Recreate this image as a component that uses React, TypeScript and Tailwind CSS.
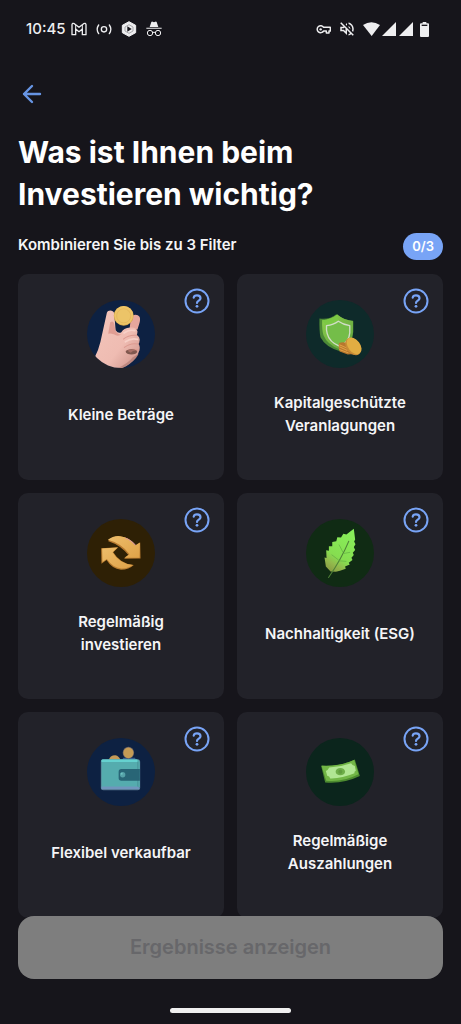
import { useState, type ReactNode } from "react";

function HandArt() {
  return (
    <svg viewBox="52 62 202 202" className="size-17" aria-hidden="true">
      <defs>
        <clipPath id="hand-clip">
          <circle cx="153" cy="163" r="101" />
        </clipPath>
        <linearGradient id="hand-skin" x1="0" y1="0" x2="1" y2="1">
          <stop offset="0" stopColor="#f3c5bb" />
          <stop offset="0.6" stopColor="#efbcb2" />
          <stop offset="1" stopColor="#c98d84" />
        </linearGradient>
      </defs>
      <circle cx="153" cy="163" r="101" fill="#0d2142" />
      <g clipPath="url(#hand-clip)">
        <path d="M182 118C184 104 202 102 208 112C212 120 208 132 202 150L178 152Z" fill="#e5a69c" />
        <path
          d="M111 100C114 91 130 91 133 102L137 152Q145 163 154 158Q160 146 180 144Q198 142 202 155Q202 162 200 166Q211 172 208 184Q208 190 205 193Q212 202 206 216Q202 235 178 252Q160 266 140 268Q100 262 74 234Q86 212 92 186Z"
          fill="url(#hand-skin)"
        />
        <path d="M121 128Q131 122 133 134L137 154Q144 166 156 164Q143 172 132 164Q122 160 115 162Z" fill="#d98f85" opacity="0.7" />
        <path d="M160 178Q178 164 200 167M163 203Q182 188 204 193M168 214Q184 204 206 211" stroke="#dc9a90" strokeWidth="3" fill="none" strokeLinecap="round" />
        <path d="M162 160Q176 149 194 153M166 186Q184 174 202 179" stroke="#f7d0c7" strokeWidth="5" fill="none" strokeLinecap="round" />
        <ellipse cx="184" cy="216" rx="17" ry="8" fill="#80584f" />
        <path d="M172 213Q186 205 201 213Q190 210 182 219Z" fill="#a87067" />
        <path d="M206 222Q196 244 160 263L144 264Q174 250 188 232Z" fill="#a9756c" opacity="0.6" />
      </g>
      <circle cx="161" cy="109" r="29.500" fill="#d9a94f" />
      <circle cx="161" cy="108" r="28" fill="#edc566" />
      <circle cx="161" cy="109" r="21" fill="#ecc468" stroke="#dfb25a" strokeWidth="2" />
    </svg>
  );
}

function ShieldArt() {
  return (
    <svg viewBox="50 61 202 202" className="size-17" aria-hidden="true">
      <defs>
        <linearGradient id="shield-green" x1="0" y1="0" x2="1" y2="1">
          <stop offset="0" stopColor="#8cd04b" />
          <stop offset="1" stopColor="#5f9f3d" />
        </linearGradient>
      </defs>
      <circle cx="151" cy="162" r="101" fill="#0e2a2a" />
      <path d="M90 116Q120 120 140 103Q160 119 190 123V158Q188 196 153 214Q108 202 93 172Q89 152 90 116Z" fill="#4c8936" />
      <path d="M98 121Q124 120 143 104Q162 120 190 124V156Q188 190 150 208Q113 194 102 166Q97 150 98 121Z" fill="url(#shield-green)" />
      <path d="M98 121Q124 120 143 104L146 124Q131 136 111 138Z" fill="#7bc944" />
      <path d="M146 124Q160 134 180 137V158Q179 184 150 199Q119 186 113 161Q110 150 111 137Q132 135 146 124Z" fill="#74bd49" stroke="#d1ddc7" strokeWidth="4" strokeLinejoin="round" />
      <path d="M148 189Q160 184 174 190L202 215Q205 224 196 224Q184 221 174 223L150 214Q145 202 148 189Z" fill="#b8772e" />
      <path d="M149 200L173 211M149 208L176 218M149 194L172 204" stroke="#e0a146" strokeWidth="3" />
      <ellipse cx="190" cy="199" rx="20" ry="29" transform="rotate(-37 190 199)" fill="#c88c36" />
      <ellipse cx="193" cy="197" rx="18" ry="28" transform="rotate(-37 193 197)" fill="#e2ad42" />
    </svg>
  );
}

function ArrowsArt() {
  return (
    <svg viewBox="52 59 202 202" className="size-17" aria-hidden="true">
      <defs>
        <linearGradient id="arrow-gold" x1="0" y1="0" x2="1" y2="1">
          <stop offset="0" stopColor="#edbd6b" />
          <stop offset="1" stopColor="#dfa248" />
        </linearGradient>
      </defs>
      <circle cx="153" cy="160" r="101" fill="#2e2005" />
      <path d="M114 124Q128 110 150 110Q178 113 195 139L210 129L211 176L162 177L175 166Q153 137 114 124Z" fill="#b77a30" />
      <path d="M114 121Q130 108 150 110Q179 113 196 137L209 129L208 174L163 174L178 164Q156 132 114 121Z" fill="url(#arrow-gold)" />
      <path d="M166 115Q186 124 196 137" stroke="#d993a1" strokeWidth="3" fill="none" />
      <path d="M94 146L145 143L130 158Q151 193 191 196Q177 210 153 210Q126 207 110 181L95 192Z" fill="#b97d31" />
      <path d="M97 147L143 144L128 158Q147 192 188 196Q173 207 154 206Q128 203 111 178L98 187Z" fill="url(#arrow-gold)" />
    </svg>
  );
}

function LeafArt() {
  return (
    <svg viewBox="49 58 202 202" className="size-17" aria-hidden="true">
      <defs>
        <linearGradient id="leaf-green" x1="0.7" y1="0" x2="0.25" y2="1">
          <stop offset="0" stopColor="#88ef5a" />
          <stop offset="0.65" stopColor="#86dd50" />
          <stop offset="0.84" stopColor="#92b84c" />
          <stop offset="1" stopColor="#899f43" />
        </linearGradient>
      </defs>
      <circle cx="150" cy="159" r="101" fill="#102b14" />
      <path
        d="M191 87L195 119L192 125L196 133L191 141L195 150L188 158L191 165L184 173L187 180L176 188L179 193L165 199L167 206L150 212L138 215L122 214L108 199L104 172L110 174L109 151L117 152L117 139L127 139L127 126L139 124L142 112L153 113L160 102L169 104Z"
        fill="url(#leaf-green)"
      />
      <path d="M176 124Q154 177 116 232" stroke="#4f8138" strokeWidth="3" fill="none" strokeLinecap="round" />
      <path d="M159 157L147 134M146 180L125 164M158 161L180 157M146 182L169 184" stroke="#61ad43" strokeWidth="2" fill="none" />
    </svg>
  );
}

function WalletArt() {
  return (
    <svg viewBox="52 57 202 202" className="size-17" aria-hidden="true">
      <circle cx="153" cy="158" r="101" fill="#0d2142" />
      <path d="M116 124Q120 108 136 108Q148 110 152 124Z" fill="#c39a57" />
      <path d="M155 124L160 116H194L200 124Z" fill="#365f91" />
      <ellipse cx="175" cy="101" rx="17" ry="18" fill="#665f63" />
      <ellipse cx="175" cy="101" rx="15" ry="16" fill="#c49b55" />
      <rect x="93" y="120" width="117" height="92" rx="8" fill="#54768f" />
      <path d="M95 124Q95 121 99 121H201Q209 122 209 131V200Q209 206 201 207H95Z" fill="#55acae" />
      <path d="M95 124Q95 121 99 121H200L205 128H95Z" fill="#65d1cf" />
      <path d="M203 126V207" stroke="#41868e" strokeWidth="2" />
      <path d="M95 201H202L208 205V209H95Z" fill="#7196bd" />
      <path d="M209 149V184H154Q146 184 146 176V157Q146 149 154 149Z" fill="#286576" />
      <circle cx="158" cy="166" r="8" fill="#55a1a8" />
      <circle cx="155" cy="163" r="3" fill="#6ec4c3" />
    </svg>
  );
}

function CashArt() {
  return (
    <svg viewBox="50 57 202 202" className="size-17" aria-hidden="true">
      <circle cx="151" cy="158" r="101" fill="#0b251c" />
      <path d="M95 140Q150 143 195 121L210 170Q160 194 107 189Z" fill="#4d8b30" />
      <path d="M96 139Q150 142 193 122L206 165Q160 189 110 184Z" fill="#72b646" />
      <path d="M119 145Q153 143 184 132Q187 138 195 140L198 154Q192 156 194 162Q156 178 122 177Q120 170 113 169L109 155Q116 152 119 145Z" fill="#b1e693" />
      <ellipse cx="152" cy="157" rx="14" ry="11" fill="#6eae48" />
      <circle cx="152" cy="157" r="6" fill="#609c3e" />
    </svg>
  );
}

type Filter = { label: string; art: ReactNode };

const filters: Filter[] = [
  { label: "Kleine Beträge", art: <HandArt /> },
  { label: "Kapitalgeschützte Veranlagungen", art: <ShieldArt /> },
  { label: "Regelmäßig investieren", art: <ArrowsArt /> },
  { label: "Nachhaltigkeit (ESG)", art: <LeafArt /> },
  { label: "Flexibel verkaufbar", art: <WalletArt /> },
  { label: "Regelmäßige Auszahlungen", art: <CashArt /> },
];

function StatusBar() {
  return (
    <div className="flex h-[58px] items-center justify-between pr-8 pl-[26px] text-[#eeeef0]">
      <div className="flex items-center gap-[5px]">
        <span className="text-[15px] leading-5 font-medium">10:45</span>
        <div className="flex items-center gap-[9px]">
          <svg viewBox="0 0 48 48" className="size-4" fill="none" stroke="currentColor" strokeWidth="4" strokeLinejoin="round" aria-hidden="true">
            <path d="M3 41V11Q4 5 10 8L24 19L38 8Q44 5 45 11V41H34V24L24 32L14 24V41Z" />
            <path d="M14 12V24M34 12V24" strokeWidth="3" />
          </svg>
          <svg viewBox="0 0 48 48" className="size-4" fill="none" stroke="currentColor" strokeWidth="4" strokeLinecap="round" aria-hidden="true">
            <circle cx="24" cy="25" r="8" />
            <path d="M8 12Q-1 25 8 38M40 12Q49 25 40 38" />
          </svg>
          <svg viewBox="0 0 48 48" className="size-4" aria-hidden="true">
            <path d="M24 2L44 13V35L24 46L4 35V13Z" fill="currentColor" stroke="currentColor" strokeWidth="3" strokeLinejoin="round" />
            <path d="M24 11L36 18V30L24 37L12 30V18Z" fill="none" stroke="#85858a" strokeWidth="2" />
            <path d="M19 16L32 24L19 32Z" fill="#17161c" />
          </svg>
          <svg viewBox="0 0 48 48" className="size-4" fill="none" aria-hidden="true">
            <path d="M1 20H47V23H1ZM11 18L16 3Q17 1 20 2L24 4L28 2Q31 1 32 3L37 18Z" fill="currentColor" />
            <circle cx="12" cy="36" r="8" stroke="currentColor" strokeWidth="3" />
            <circle cx="36" cy="36" r="8" stroke="currentColor" strokeWidth="3" />
            <path d="M20 35Q24 32 28 35" stroke="currentColor" strokeWidth="3" />
          </svg>
        </div>
      </div>
      <div className="flex items-center gap-[7px]">
        <svg viewBox="0 0 48 48" className="size-4" fill="none" stroke="currentColor" strokeWidth="4.500" strokeLinejoin="round" aria-hidden="true">
          <path d="M26 19H46V30H42V36H34V30H26A10.500 10.500 0 1 1 26 19Z" />
          <circle cx="17" cy="25" r="3.500" fill="currentColor" stroke="none" />
        </svg>
        <svg viewBox="0 0 24 24" className="size-4.5" fill="currentColor" aria-hidden="true">
          <path d="M4.340 2.930 2.930 4.340 7.290 8.700 7 9H3v6h4l5 5v-6.590l4.180 4.180c-.650.490-1.380.880-2.180 1.110v2.060a8.940 8.940 0 0 0 3.610-1.750l2.050 2.050 1.410-1.410zM10 15.170 7.830 13H5v-2h2.830l.880-.880L10 11.410zM19 12c0 .820-.150 1.610-.410 2.340l1.530 1.530c.560-1.170.880-2.480.880-3.870 0-4.280-2.990-7.860-7-8.770v2.060c2.890.860 5 3.540 5 6.710m-7-8-1.880 1.880L12 7.760zm4.500 8A4.500 4.500 0 0 0 14 7.970v1.790l2.480 2.480c.010-.080.020-.160.020-.240" />
        </svg>
        <div className="flex items-center gap-0.5">
          <svg viewBox="0 0 51 42" className="h-3.5 w-[17px]" fill="currentColor" aria-hidden="true">
            <path d="M0 9Q25-8 51 9L26 42Z" />
          </svg>
          <svg viewBox="0 0 42 42" className="size-3.5" fill="currentColor" aria-hidden="true">
            <path d="M42 0V42H0Z" />
          </svg>
          <svg viewBox="0 0 42 42" className="ml-px size-3.5" fill="currentColor" aria-hidden="true">
            <path d="M42 0V42H0Z" />
          </svg>
        </div>
        <svg viewBox="0 0 27 45" className="h-[15px] w-[9px]" fill="currentColor" aria-hidden="true">
          <path d="M8 0H19V4H24Q27 4 27 7V42Q27 45 24 45H3Q0 45 0 42V7Q0 4 3 4H8Z" />
          <path d="M5 8H22V12H5Z" fill="#17161c" />
        </svg>
      </div>
    </div>
  );
}

function FilterCard({ filter, selected, onToggle }: { filter: Filter; selected: boolean; onToggle: () => void }) {
  return (
    <li className="relative">
      <button
        type="button"
        aria-pressed={selected}
        onClick={onToggle}
        className={`flex min-h-[206px] w-full flex-col items-center gap-[23px] rounded-[10px] px-6 pt-[26px] pb-10 ${selected ? "bg-[#2c3448]" : "bg-[#222229]"}`}
      >
        {filter.art}
        <span className="flex min-h-[46px] items-center text-center text-[15px] leading-[23px] font-semibold">{filter.label}</span>
      </button>
      <button type="button" aria-label={`Hilfe: ${filter.label}`} className="absolute top-3.5 right-3.5 text-[#78a4f6]">
        <svg viewBox="0 0 26 26" className="size-[26px]" fill="none" stroke="currentColor" strokeWidth="2" strokeLinecap="round" aria-hidden="true">
          <circle cx="13" cy="13" r="11.500" />
          <path d="M9.700 9.600C10 7.900 11.500 7.400 13 7.400C15 7.400 16.500 8.500 16.500 10.200C16.500 12.600 13 12.500 13 15" strokeWidth="2.200" />
          <circle cx="13" cy="18.300" r="1.400" fill="currentColor" stroke="none" />
        </svg>
      </button>
    </li>
  );
}

export default function App() {
  const [selected, setSelected] = useState<string[]>([]);

  const toggle = (label: string) =>
    setSelected((current) => {
      if (current.includes(label)) return current.filter((item) => item !== label);
      return current.length < 3 ? [...current, label] : current;
    });

  return (
    <div className="flex min-h-screen flex-col bg-[#16151b] font-['Inter',sans-serif] text-[#f5f5f7]">
      <StatusBar />
      <main className="px-[18px] pt-6">
        <button type="button" aria-label="Zurück" className="ml-0.5 block text-[#6795e4]">
          <svg viewBox="0 0 24 24" className="size-6" fill="none" stroke="currentColor" strokeWidth="2.400" strokeLinecap="round" strokeLinejoin="round" aria-hidden="true">
            <path d="M20 12H4M12 4L4 12L12 20" />
          </svg>
        </button>
        <h1 className="mt-[25px] max-w-[340px] text-[30px] leading-[42px] font-bold text-white">Was ist Ihnen beim Investieren wichtig?</h1>
        <div className="mt-[18px] flex items-start justify-between">
          <p className="text-[15px] leading-6 font-semibold">Kombinieren Sie bis zu 3 Filter</p>
          <span className="rounded-full bg-[#78a4f6] px-[9px] text-[13px] leading-[27px] font-semibold text-white">{selected.length}/3</span>
        </div>
        <ul className="mt-3.5 grid grid-cols-2 gap-[13px]">
          {filters.map((filter) => (
            <FilterCard key={filter.label} filter={filter} selected={selected.includes(filter.label)} onToggle={() => toggle(filter.label)} />
          ))}
        </ul>
      </main>
      <footer className="sticky bottom-0 -mt-0.5 px-[18px] pb-[11px]">
        <button
          type="button"
          disabled={selected.length === 0}
          className="mb-[29px] block w-full rounded-2xl bg-[#78a4f6] py-[18px] text-xl leading-[27px] font-semibold text-white disabled:bg-[#7e7e7e] disabled:text-[#67676a]"
        >
          Ergebnisse anzeigen
        </button>
        <div className="mx-auto h-[5px] w-[121px] rounded-full bg-[#f0f0f0]" />
      </footer>
    </div>
  );
}
